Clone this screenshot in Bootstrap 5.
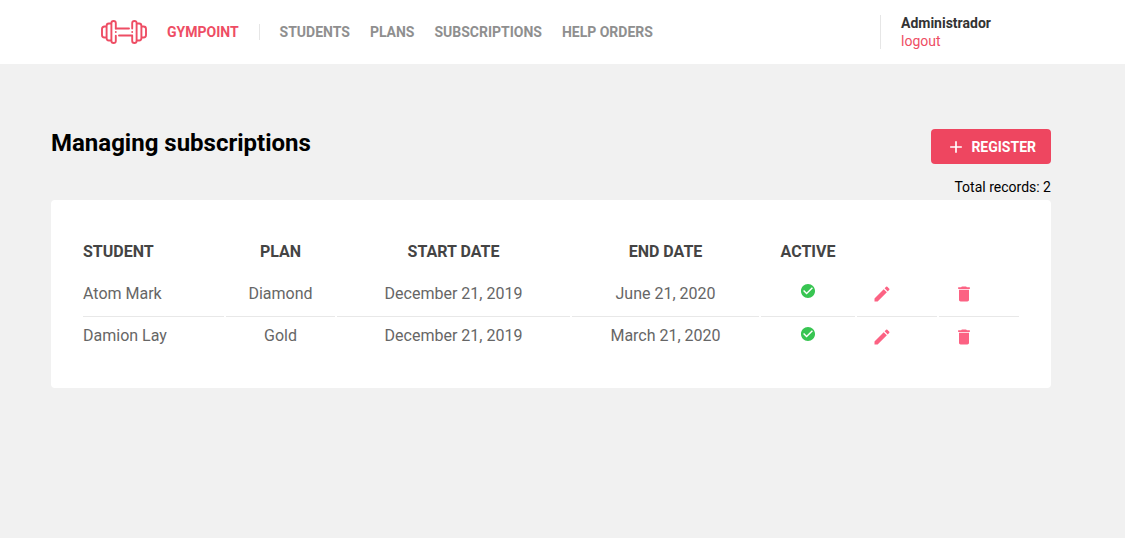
<!DOCTYPE html>
<html lang="en">
<head>
<meta charset="utf-8">
<meta name="viewport" content="width=device-width, initial-scale=1">
<title>Gympoint</title>
<link href="https://cdn.jsdelivr.net/npm/bootstrap@5.3.0/dist/css/bootstrap.min.css" rel="stylesheet">
<style>
  body { font-family: Roboto, sans-serif; font-size: 14px; line-height: 16px; color: #000; background: #f1f1f1; }
  .topbar { height: 64px; padding: 0 101px; }
  .brand { color: #ee4d64; font-weight: 700; text-decoration: none; padding-right: 20px; }
  .brand svg { margin-right: 20px; }
  .rule { width: 1px; height: 16px; background: #e6e6e6; margin-right: 20px; }
  .menu { gap: 20px; }
  .menu a { color: #8f8f8f; font-weight: 700; text-decoration: none; letter-spacing: -.01px; }
  .profile { width: 144px; height: 34px; border-left: 1px solid #e6e6e6; padding-left: 20px; line-height: 18px; }
  .profile strong { color: #333; }
  .profile a { color: #ee4d64; text-decoration: none; }
  .page { width: 1000px; margin: 65px 0 0 51px; }
  .page h1 { font-size: 24px; line-height: 28px; font-weight: 700; }
  .btn-register { width: 120px; height: 35px; padding: 0 15px; background: #ee4660; color: #fff; font-size: 14px; line-height: 16px; font-weight: 700; border: 0; border-radius: 4px; }
  .total { margin: 15px 0 5px; }
  .panel { height: 188px; padding: 30px; border-radius: 4px; }
  .records { width: 940px; table-layout: fixed; border-collapse: separate; border-spacing: 2px; font-size: 16px; line-height: 19px; text-align: center; color: #666; }
  .records th { height: 38px; color: #444; font-weight: 700; padding: 10px 0 0; vertical-align: top; }
  .records td { height: 45px; padding: 12px 0 0; vertical-align: top; }
  .records tr > :first-child { text-align: left; }
  .records tbody tr:first-child td { border-bottom: 1px solid #e8e8e8; }
  .records tbody tr:last-child td { height: 37px; padding-top: 7px; }
  .records td svg { display: block; margin: 0 auto; }
  .records tbody .state { padding-top: 11px; }
  .records .tool { padding-right: 30px; }
  .records tbody tr:last-child .tool { padding-top: 8px; }
</style>
</head>
<body>
<header class="topbar bg-white d-flex align-items-center justify-content-between">
  <div class="d-flex align-items-center">
    <a class="brand d-flex align-items-center" href="#">
      <svg width="46" height="24" viewBox="0 0 46 24" fill="none" stroke="#ee4d64" stroke-width="1.9" stroke-linecap="round" stroke-linejoin="round">
        <path d="M5 6.500H3.500Q1 6.500 1 9V15Q1 17.500 3.500 17.500H5M10 3.500H7.800Q5.600 3.500 5.600 6V18Q5.600 20.500 7.800 20.500H10M14.800 8.500V3Q14.800 1 12.600 1T10.400 3V21Q10.400 23 12.600 23T14.800 21V15.800M14.800 12V12.050"/>
        <path d="M41 6.500H42.500Q45 6.500 45 9V15Q45 17.500 42.500 17.500H41M36 3.500H38.200Q40.400 3.500 40.400 6V18Q40.400 20.500 38.200 20.500H36M31.200 8.500V3Q31.200 1 33.400 1T35.600 3V21Q35.600 23 33.400 23T31.200 21V15.800M31.200 12V12.050"/>
        <path d="M14.800 8.500H28M18 15.500H31.200"/>
      </svg>
      <span>GYMPOINT</span>
    </a>
    <div class="rule"></div>
    <nav class="menu d-flex">
      <a href="#">STUDENTS</a><a href="#">PLANS</a><a href="#">SUBSCRIPTIONS</a><a href="#">HELP ORDERS</a>
    </nav>
  </div>
  <div class="profile d-flex flex-column justify-content-center">
    <strong>Administrador</strong>
    <a href="#">logout</a>
  </div>
</header>
<main class="page">
  <div class="d-flex justify-content-between align-items-start">
    <h1 class="mb-0">Managing subscriptions</h1>
    <button class="btn btn-register d-flex align-items-center justify-content-between" type="button">
      <svg width="20" height="20" viewBox="0 0 24 24" fill="currentColor"><path d="M19 13h-6v6h-2v-6H5v-2h6V5h2v6h6v2z"/></svg>
      <span>REGISTER</span>
    </button>
  </div>
  <div class="total text-end">Total records: 2</div>
  <section class="panel bg-white">
    <table class="records">
      <colgroup><col style="width:141px"><col style="width:109px"><col style="width:233px"><col style="width:187px"><col style="width:94px"><col style="width:80px"><col style="width:80px"></colgroup>
      <thead><tr><th>STUDENT</th><th>PLAN</th><th>START DATE</th><th>END DATE</th><th>ACTIVE</th><th></th><th></th></tr></thead>
      <tbody>
        <tr>
          <td>Atom Mark</td><td>Diamond</td><td>December 21, 2019</td><td>June 21, 2020</td>
          <td class="state"><svg width="16" height="16" viewBox="0.6 0.6 22.8 22.8" fill="#38c552"><path d="M12 2C6.480 2 2 6.480 2 12s4.480 10 10 10 10-4.480 10-10S17.520 2 12 2zm-2 15l-5-5 1.410-1.410L10 14.170l7.590-7.590L19 8l-9 9z"/></svg></td>
          <td class="tool"><svg width="20" height="20" viewBox="0 0 24 24" fill="#fc6283"><path d="M3 17.250V21h3.750L17.810 9.940l-3.750-3.750L3 17.250zM20.710 7.040a1 1 0 0 0 0-1.410l-2.340-2.340a1 1 0 0 0-1.410 0l-1.830 1.830 3.750 3.750 1.830-1.830z"/></svg></td>
          <td class="tool"><svg width="20" height="20" viewBox="0 0 24 24" fill="#fc6283"><path d="M6 19c0 1.100.9 2 2 2h8c1.100 0 2-.9 2-2V7H6v12zM19 4h-3.500l-1-1h-5l-1 1H5v2h14V4z"/></svg></td>
        </tr>
        <tr>
          <td>Damion Lay</td><td>Gold</td><td>December 21, 2019</td><td>March 21, 2020</td>
          <td class="state"><svg width="16" height="16" viewBox="0.6 0.6 22.8 22.8" fill="#38c552"><path d="M12 2C6.480 2 2 6.480 2 12s4.480 10 10 10 10-4.480 10-10S17.520 2 12 2zm-2 15l-5-5 1.410-1.410L10 14.170l7.590-7.590L19 8l-9 9z"/></svg></td>
          <td class="tool"><svg width="20" height="20" viewBox="0 0 24 24" fill="#fc6283"><path d="M3 17.250V21h3.750L17.810 9.940l-3.750-3.750L3 17.250zM20.710 7.040a1 1 0 0 0 0-1.410l-2.340-2.340a1 1 0 0 0-1.410 0l-1.830 1.830 3.750 3.750 1.830-1.830z"/></svg></td>
          <td class="tool"><svg width="20" height="20" viewBox="0 0 24 24" fill="#fc6283"><path d="M6 19c0 1.100.9 2 2 2h8c1.100 0 2-.9 2-2V7H6v12zM19 4h-3.500l-1-1h-5l-1 1H5v2h14V4z"/></svg></td>
        </tr>
      </tbody>
    </table>
  </section>
</main>
<script src="https://cdn.jsdelivr.net/npm/bootstrap@5.3.0/dist/js/bootstrap.bundle.min.js"></script>
</body>
</html>
